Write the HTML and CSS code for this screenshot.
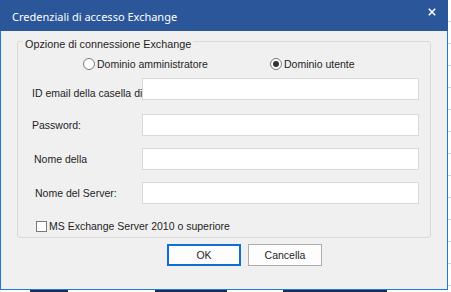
FILE: index.html
```html
<!DOCTYPE html>
<html lang="it">
<head>
<meta charset="utf-8">
<title>Credenziali di accesso Exchange</title>
<link rel="stylesheet" href="styles.css">
</head>
<body>
<div class="screen">
  <div class="window">
    <div class="titlebar">
      <span class="title">Credenziali di accesso Exchange</span>
      <svg class="close" width="8" height="8" viewBox="0 0 8 8" aria-hidden="true">
        <path d="M0.8 0.8 L7.2 7.2 M7.2 0.8 L0.8 7.2" stroke="#ffffff" stroke-width="1.6" fill="none"/>
      </svg>
    </div>
    <div class="content">
      <fieldset class="group">
        <legend class="group-title">Opzione di connessione Exchange</legend>
        <div class="radios">
          <label class="radio"><span class="radio-dot"></span>Dominio amministratore</label>
          <label class="radio"><span class="radio-dot checked"></span>Dominio utente</label>
        </div>
        <div class="fields">
          <div class="field field-first"><span class="lbl lbl-low">ID email della casella di</span><span class="input"></span></div>
          <div class="field"><span class="lbl">Password:</span><span class="input"></span></div>
          <div class="field"><span class="lbl lbl-in2">Nome della</span><span class="input"></span></div>
          <div class="field"><span class="lbl lbl-in3">Nome del Server:</span><span class="input"></span></div>
        </div>
        <label class="check"><span class="check-box"></span>MS Exchange Server 2010 o superiore</label>
      </fieldset>
      <div class="buttons">
        <button class="btn btn-default">OK</button>
        <button class="btn">Cancella</button>
      </div>
    </div>
  </div>
  <div class="side"></div>
</div>
<div class="behind">
  <span class="frag frag-a"></span>
  <span class="frag frag-b"></span>
  <span class="frag frag-c"></span>
</div>
</body>
</html>
```

FILE: styles.css
```css
html, body {
  margin: 0;
  padding: 0;
}
body {
  background: #ffffff;
  width: 451px;
  height: 292px;
  overflow: hidden;
  font-family: "Liberation Sans", Arial, sans-serif;
  font-size: 10.5px;
  color: #1e1e1e;
}
.screen {
  display: flex;
}
.window {
  width: 448px;
  height: 290px;
  box-sizing: border-box;
  border: 1px solid #1a7ad6;
  border-top: 0;
  background: #f0f0f0;
  display: flex;
  flex-direction: column;
}
.side {
  flex: 1;
  height: 290px;
  background: repeating-linear-gradient(180deg, #ffffff 0, #ffffff 21px, #c5d6ec 21px, #c5d6ec 22px);
}
.titlebar {
  margin: 0 -1px;
  height: 31px;
  background: #2b579a;
  display: flex;
  align-items: flex-start;
  color: #ffffff;
}
.title {
  margin: 9px 0 0 12px;
  font-family: "Noto Sans", "Open Sans", sans-serif;
  font-size: 11px;
  line-height: 16px;
}
.close {
  margin: 8px 12px 0 auto;
}
.content {
  display: flex;
  flex-direction: column;
}
.group {
  margin: 0 0 0 16px;
  width: 414px;
  box-sizing: border-box;
  border: 1px solid #dadada;
  border-radius: 3px;
  padding: 0 0 4px 0;
  min-width: 0;
}
.group-title {
  margin-left: 5px;
  padding: 6px 2px 0 2px;
  line-height: 14px;
  font-size: 10.8px;
}
.radios {
  margin: 6px 0 0 65px;
  display: grid;
  grid-template-columns: 187px auto;
  line-height: 14px;
}
.radio {
  display: inline-flex;
  align-items: center;
  gap: 2px;
}
.radio-dot {
  width: 12px;
  height: 12px;
  box-sizing: border-box;
  border: 1px solid #7a7a7a;
  border-radius: 50%;
  background: #ffffff;
  display: inline-flex;
  align-items: center;
  justify-content: center;
}
.radio-dot.checked::after {
  content: "";
  width: 6px;
  height: 6px;
  border-radius: 50%;
  background: #333333;
}
.fields {
  margin-top: 7px;
  display: flex;
  flex-direction: column;
  gap: 12px;
}
.field {
  display: flex;
  align-items: center;
  padding-left: 14px;
}
.field-first {
  margin-bottom: 2px;
}
.lbl {
  width: 110px;
  white-space: nowrap;
  line-height: 14px;
  box-sizing: border-box;
}
.lbl-low {
  padding-top: 7px;
}
.lbl-in2 {
  padding-left: 2px;
}
.lbl-in3 {
  padding-left: 3px;
}
.input {
  width: 277px;
  height: 22px;
  box-sizing: border-box;
  border: 1px solid #d9d9d9;
  background: #ffffff;
}
.check {
  margin: 15px 0 0 18px;
  display: flex;
  align-items: center;
  gap: 2px;
  line-height: 14px;
}
.check-box {
  width: 11px;
  height: 11px;
  box-sizing: border-box;
  border: 1px solid #7a7a7a;
  background: #ffffff;
}
.buttons {
  margin: 6px 0 0 166px;
  display: flex;
  gap: 7px;
}
.btn {
  width: 74px;
  height: 22px;
  box-sizing: border-box;
  border: 1px solid #adadad;
  background: #fdfdfd;
  font-family: "Liberation Sans", Arial, sans-serif;
  font-size: 10.5px;
  color: #1e1e1e;
  padding: 0;
}
.btn-default {
  border: 2px solid #0f6fd0;
}
.behind {
  height: 2px;
  display: flex;
  background: #ffffff;
}
.frag {
  height: 2px;
  background: #1e2a55;
}
.frag-a {
  margin-left: 30px;
  width: 38px;
}
.frag-b {
  margin-left: 87px;
  width: 72px;
}
.frag-c {
  margin-left: 56px;
  width: 104px;
}
```
